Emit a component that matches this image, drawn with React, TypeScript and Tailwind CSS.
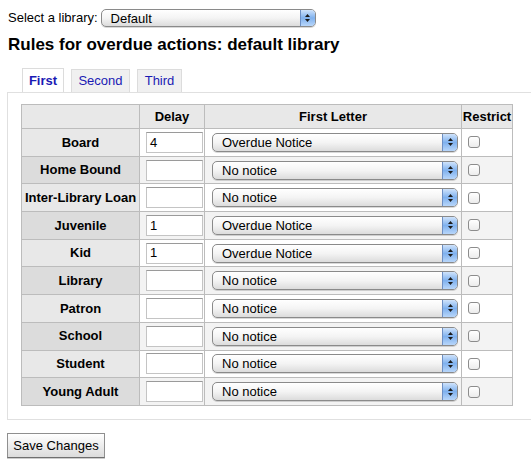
import React from "react";

const rows: { name: string; delay: string; letter: string }[] = [
  { name: "Board", delay: "4", letter: "Overdue Notice" },
  { name: "Home Bound", delay: "", letter: "No notice" },
  { name: "Inter-Library Loan", delay: "", letter: "No notice" },
  { name: "Juvenile", delay: "1", letter: "Overdue Notice" },
  { name: "Kid", delay: "1", letter: "Overdue Notice" },
  { name: "Library", delay: "", letter: "No notice" },
  { name: "Patron", delay: "", letter: "No notice" },
  { name: "School", delay: "", letter: "No notice" },
  { name: "Student", delay: "", letter: "No notice" },
  { name: "Young Adult", delay: "", letter: "No notice" },
];

function MacSelect({ value, className }: { value: string; className: string }) {
  return (
    <div
      className={
        "relative flex items-center rounded-[5px] border border-[#8a8a8a] bg-gradient-to-b from-white via-[#f4f4f4] to-[#dcdcdc] shadow-[0_1px_0_rgba(0,0,0,0.15)] " +
        className
      }
    >
      <span className="pl-[9px] text-[13px] leading-none text-black">{value}</span>
      {/* stepper arrows */}
      <span className="absolute right-0 top-0 bottom-0 w-[15px] rounded-r-[4px] border-l border-[#6d8fc4] bg-gradient-to-b from-[#cfe3fb] via-[#7fb1ee] to-[#b8d6fa] flex flex-col items-center justify-center gap-[2px]">
        <svg width="5" height="3" viewBox="0 0 5 3">
          <path d="M0 3 L2.5 0 L5 3 Z" fill="#1b1b1b" />
        </svg>
        <svg width="5" height="3" viewBox="0 0 5 3">
          <path d="M0 0 L2.5 3 L5 0 Z" fill="#1b1b1b" />
        </svg>
      </span>
    </div>
  );
}

export default function App() {
  return (
    <div className="w-[531px] h-[468px] overflow-hidden bg-white text-black font-['Liberation_Sans',Arial,sans-serif]">
      <div className="flex items-center pl-[8px] pt-[9px] h-[27px] gap-[3px]">
        <span className="text-[13px]">Select a library:</span>
        <MacSelect value="Default" className="w-[215px] h-[18px]" />
      </div>

      <h1 className="pl-[8px] mt-[8px] text-[17px] font-bold leading-[20px]">
        Rules for overdue actions: default library
      </h1>

      {/* tabs */}
      <div className="mt-[14px] pl-[22px] flex gap-[7px] h-[23px] items-end relative z-10">
        <div className="h-[24px] w-[42px] justify-center border border-b-0 border-[#dcdcdc] bg-white text-[13px] font-bold text-[#1a1ab4] flex items-center">
          First
        </div>
        <div className="h-[23px] w-[59px] justify-center border border-b-0 border-[#dcdcdc] bg-[#f0f0f0] text-[13px] text-[#1a1ab4] flex items-center">
          Second
        </div>
        <div className="h-[23px] w-[45px] justify-center border border-b-0 border-[#dcdcdc] bg-[#f0f0f0] text-[13px] text-[#1a1ab4] flex items-center">
          Third
        </div>
      </div>

      {/* tab panel */}
      <div className="ml-[7px] mr-[-10px] border border-[#e0e0e0] pt-[11px] pb-[13px] pl-[13px]">
        <table className="border-collapse text-[13px] w-[491px] table-fixed">
          <thead>
            <tr className="h-[24px]">
              <th className="w-[118px] border border-[#bcbcbc] bg-[#e8e8e8]"></th>
              <th className="w-[65px] border border-[#bcbcbc] bg-[#e8e8e8] font-bold">Delay</th>
              <th className="w-[257px] border border-[#bcbcbc] bg-[#e8e8e8] font-bold">First Letter</th>
              <th className="w-[51px] border border-[#bcbcbc] bg-[#e8e8e8] font-bold">Restrict</th>
            </tr>
          </thead>
          <tbody>
            {rows.map((r, i) => {
              const even = i % 2 === 1;
              return (
                <tr key={r.name} className="h-[27.7px]">
                  <th
                    className={
                      "border border-[#bcbcbc] font-bold whitespace-nowrap " +
                      (even ? "bg-[#dcdcdc]" : "bg-[#e8e8e8]")
                    }
                  >
                    {r.name}
                  </th>
                  <td className={"border border-[#bcbcbc] pl-[6px] pr-[1px] " + (even ? "bg-[#f3f3f3]" : "bg-white")}>
                    <div className="h-[21px] w-[57px] border border-[#c4c4c4] border-t-[#9a9a9a] bg-white pl-[3px] flex items-center text-[13px]">
                      {r.delay}
                    </div>
                  </td>
                  <td className={"border border-[#bcbcbc] pl-[7px] pr-[3px] " + (even ? "bg-[#f3f3f3]" : "bg-white")}>
                    <MacSelect value={r.letter} className="w-[246px] h-[19px]" />
                  </td>
                  <td className={"border border-[#bcbcbc] pl-[6px] " + (even ? "bg-[#f3f3f3]" : "bg-white")}>
                    <div className="w-[12px] h-[12px] rounded-[3px] border border-[#8c8c8c] bg-gradient-to-b from-white to-[#ececec]" />
                  </td>
                </tr>
              );
            })}
          </tbody>
        </table>
      </div>

      <div className="pl-[7px] mt-[13px]">
        <button className="h-[25px] w-[98px] border border-[#8f8f8f] border-b-[#6f6f6f] bg-gradient-to-b from-white to-[#dcdcdc] text-[13px] text-black shadow-[0_1px_0_rgba(0,0,0,0.2)]">
          Save Changes
        </button>
      </div>
    </div>
  );
}
